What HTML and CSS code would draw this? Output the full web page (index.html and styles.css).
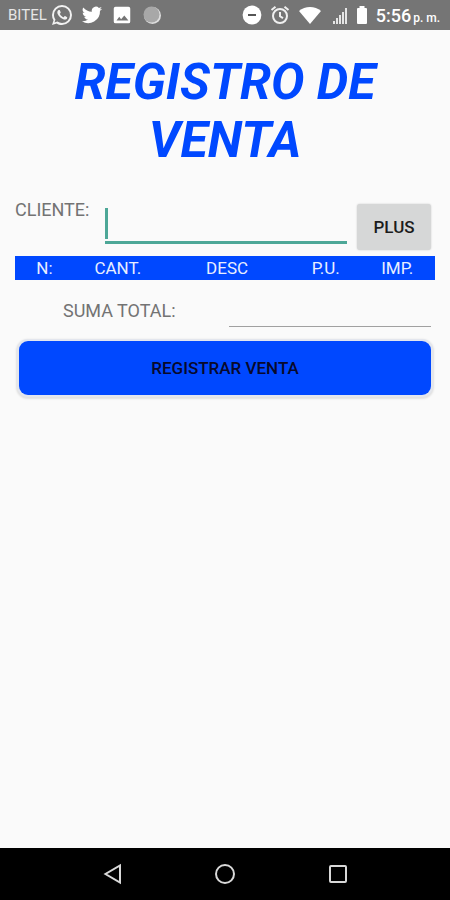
FILE: index.html
```html
<!DOCTYPE html>
<html lang="es">
<head>
    <meta charset="UTF-8">
    <meta name="viewport" content="width=device-width, initial-scale=1.0">
    <title>Registro de Venta</title>
    <link rel="stylesheet" href="styles.css">
</head>
<body>
    <div class="screen">
        <header class="status-bar">
            <div class="status-left">
                <span class="carrier">BITEL</span>
                <!-- WhatsApp -->
                <svg width="22" height="22" viewBox="1 1 22 22" fill="#f2f2f2"><path d="M16.75 13.96c.25.13.41.2.46.3.06.11.04.61-.21 1.18-.2.56-1.24 1.1-1.7 1.12-.46.02-.47.36-2.96-.73-2.49-1.09-3.99-3.75-4.11-3.92-.12-.17-.96-1.38-.92-2.61.05-1.22.69-1.8.95-2.04.24-.26.51-.29.68-.26h.47c.15 0 .36-.06.55.45l.69 1.87c.06.13.1.28.01.44l-.27.41-.39.42c-.12.12-.26.25-.12.5.12.26.62 1.09 1.32 1.78.91.88 1.71 1.17 1.95 1.3.24.14.39.12.54-.04l.81-.94c.19-.25.35-.19.58-.11l1.67.88M12 2a10 10 0 0 1 10 10 10 10 0 0 1-10 10c-1.97 0-3.8-.57-5.35-1.55L2 22l1.55-4.65A9.97 9.97 0 0 1 2 12 10 10 0 0 1 12 2m0 2a8 8 0 0 0-8 8c0 1.72.54 3.31 1.46 4.61L4.5 19.5l2.89-.96A7.95 7.95 0 0 0 12 20a8 8 0 0 0 8-8 8 8 0 0 0-8-8z"/></svg>
                <!-- Twitter -->
                <svg width="22" height="22" viewBox="0 0 24 24" fill="#fff"><path d="M23 5.1a9 9 0 0 1-2.6.7 4.5 4.5 0 0 0 2-2.5 9 9 0 0 1-2.85 1.1 4.5 4.5 0 0 0-7.7 4.1A12.8 12.8 0 0 1 2.5 3.8a4.5 4.5 0 0 0 1.4 6 4.5 4.5 0 0 1-2-.55v.05a4.5 4.5 0 0 0 3.6 4.4 4.5 4.5 0 0 1-2 .1 4.5 4.5 0 0 0 4.2 3.1A9 9 0 0 1 1 18.8a12.8 12.8 0 0 0 19.7-11.4A9 9 0 0 0 23 5.1z"/></svg>
                <!-- Imagen -->
                <svg width="22" height="22" viewBox="0 0 24 24" fill="#fff"><path fill-rule="evenodd" d="M21 19V5a2 2 0 0 0-2-2H5a2 2 0 0 0-2 2v14a2 2 0 0 0 2 2h14a2 2 0 0 0 2-2zM9 14l2 2.5 3.5-4L19 18H6z"/></svg>
                <svg width="22" height="22" viewBox="0 0 22 22"><circle cx="11.5" cy="11.5" r="8.5" fill="#dedede"/><circle cx="10.5" cy="10.5" r="8" fill="#a8a8a8"/></svg>
            </div>
            <div class="status-right">
                <!-- No molestar -->
                <svg width="20" height="20" viewBox="0 0 20 20"><circle cx="10" cy="10" r="9.4" fill="#fff"/><path d="M6 10h8" stroke="#555" stroke-width="2"/></svg>
                <!-- Alarma -->
                <svg width="20" height="20" viewBox="0 0 20 20" fill="none" stroke="#f0f0f0" stroke-width="2"><circle cx="10" cy="11" r="7"/><path d="M10 7v4.3l3 1.8M1.5 5l4-3.3M18.5 5l-4-3.3"/></svg>
                <!-- Wifi -->
                <svg class="wifi" width="24" height="20" viewBox="0 0 24 20"><path d="M1 6C7 .5 17 .5 23 6L12 19z" fill="#fff"/></svg>
                <!-- Señal -->
                <svg width="16" height="20" viewBox="0 0 16 20" fill="#e6e6e6"><path d="M1 16h2v3H1zM4 13h2v6H4zM7 10h2v9H7zM10 7h2v12h-2zM13 3h2v16h-2z"/></svg>
                <!-- Batería -->
                <svg width="12" height="20" viewBox="0 0 12 20"><path d="M3.5 1h5v2H10a1 1 0 0 1 1 1v14a1 1 0 0 1-1 1H2a1 1 0 0 1-1-1V4a1 1 0 0 1 1-1h1.5z" fill="#fff"/></svg>
                <div class="clock"><span>5:56</span><small>p. m.</small></div>
            </div>
        </header>

        <main class="content">
            <h1>REGISTRO DE VENTA</h1>

            <form class="sale-form">
                <div class="client-row">
                    <label for="cliente">CLIENTE:</label>
                    <div class="client-field">
                        <span class="cursor"></span>
                        <input type="text" id="cliente" name="cliente">
                    </div>
                    <button type="button" class="plus-button">PLUS</button>
                </div>

                <table class="items">
                    <thead>
                        <tr>
                            <th class="col-n">N:</th>
                            <th class="col-cant">CANT.</th>
                            <th class="col-desc">DESC</th>
                            <th class="col-pu">P.U.</th>
                            <th class="col-imp">IMP.</th>
                        </tr>
                    </thead>
                </table>

                <div class="total-row">
                    <label for="total">SUMA TOTAL:</label>
                    <input type="text" id="total" name="total">
                </div>

                <button type="button" class="register-button">REGISTRAR VENTA</button>
            </form>
        </main>

        <nav class="nav-bar">
            <button type="button" aria-label="Atrás">
                <svg width="20" height="22" viewBox="0 0 20 22"><path d="M17 2.5v17L2.5 11z"/></svg>
            </button>
            <button type="button" aria-label="Inicio">
                <svg width="22" height="22" viewBox="0 0 22 22"><circle cx="11" cy="11" r="9"/></svg>
            </button>
            <button type="button" aria-label="Recientes">
                <svg width="20" height="20" viewBox="0 0 20 20"><rect x="2" y="2" width="16" height="16" rx="1"/></svg>
            </button>
        </nav>
    </div>
</body>
</html>
```
FILE: styles.css
```css
body {
    font-family: Roboto, Arial, sans-serif;
    margin: 0;
    padding: 0;
    background-color: #fafafa;
    color: #737373;
    font-size: 17px;
}

button,
input {
    font-family: inherit;
    font-size: inherit;
    border: none;
    padding: 0;
    box-sizing: border-box;
}

.screen {
    display: flex;
    flex-direction: column;
    min-height: 100vh;
}

/* Status bar */
.status-bar {
    display: flex;
    justify-content: space-between;
    align-items: center;
    height: 30px;
    padding: 0 10px 0 8px;
    background-color: #757575;
    color: #fff;
}

.status-left,
.status-right {
    display: flex;
    align-items: center;
    gap: 8px;
}

.carrier {
    font-size: 15px;
    color: #e6e6e6;
    margin-right: -4px;
}

.wifi {
    margin-right: 2px;
}

.clock {
    display: flex;
    align-items: baseline;
    gap: 2px;
    font-size: 18px;
    font-weight: 500;
    white-space: nowrap;
}

.clock small {
    font-size: 12px;
}

/* Content */
.content {
    flex: 1;
    padding: 23px 15px;
}

h1 {
    margin: 0;
    text-align: center;
    color: #0048ff;
    font-size: 50px;
    line-height: 58px;
    font-weight: bold;
    font-style: italic;
}

label {
    font-size: 18px;
    line-height: 20px;
}

.client-row {
    display: flex;
    align-items: flex-start;
    margin-top: 31px;
    padding-right: 4px;
}

.client-row label {
    width: 90px;
}

.client-field {
    display: flex;
    flex: 1;
    min-width: 0;
    height: 44px;
    align-items: flex-start;
    box-sizing: border-box;
    border-bottom: 3px solid #4da797;
    padding-top: 8px;
}

.cursor {
    width: 3px;
    height: 31px;
    background-color: #4da797;
}

.client-field input {
    flex: 1;
    min-width: 0;
    height: 31px;
    padding-left: 4px;
    background: transparent;
    outline: none;
}

.plus-button {
    width: 74px;
    height: 46px;
    margin-top: 4px;
    margin-left: 10px;
    border-radius: 3px;
    background-color: #d6d7d7;
    box-shadow: 0 0 2px rgba(0, 0, 0, 0.2);
    color: #1c1c1c;
    font-weight: 500;
}

.items {
    width: 100%;
    margin-top: 6px;
    border-collapse: collapse;
    table-layout: fixed;
    background-color: #0048ff;
    color: #e8eeff;
}

.items th {
    height: 24px;
    padding: 0;
    font-weight: normal;
    line-height: 24px;
}

.col-n {
    width: 14%;
}

.col-cant {
    width: 21%;
}

.col-desc {
    width: 31%;
}

.col-pu {
    width: 16%;
}

.col-imp {
    width: 18%;
}

.total-row {
    display: flex;
    align-items: center;
    margin-top: 14px;
    padding: 0 4px 0 48px;
}

.total-row label {
    flex: 1;
}

.total-row input {
    width: 55%;
    height: 33px;
    border-bottom: 1px solid #a0a0a0;
    background: transparent;
    outline: none;
}

.register-button {
    display: block;
    width: calc(100% - 8px);
    height: 54px;
    margin: 14px auto 0;
    border-radius: 9px;
    background-color: #0048ff;
    box-shadow: 0 0 0 2px #e3e6ee, 0 1px 2px 3px rgba(0, 0, 0, 0.1);
    color: #08092c;
    font-weight: 500;
}

/* Navigation bar */
.nav-bar {
    display: flex;
    justify-content: center;
    height: 52px;
    background-color: #000;
}

.nav-bar button {
    display: flex;
    justify-content: center;
    align-items: center;
    width: 25%;
    background: transparent;
}

.nav-bar svg {
    fill: none;
    stroke: #d8d8d8;
    stroke-width: 2;
}
```
